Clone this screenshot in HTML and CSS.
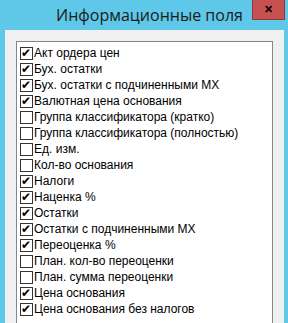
FILE: index.html
```html
<!DOCTYPE html>
<html lang="ru">
<head>
    <meta charset="UTF-8">
    <title>Информационные поля</title>
    <link rel="stylesheet" href="styles.css">
</head>
<body>
    <div class="window">
        <div class="titlebar">
            <span class="title">Информационные поля</span>
            <span class="close">&#x2715;</span>
        </div>
        <div class="body">
            <div class="list">
                <div class="item"><span class="box on"></span>Акт ордера цен</div>
                <div class="item"><span class="box on"></span>Бух. остатки</div>
                <div class="item"><span class="box on"></span>Бух. остатки с подчиненными МХ</div>
                <div class="item"><span class="box on"></span>Валютная цена основания</div>
                <div class="item"><span class="box"></span>Группа классификатора (кратко)</div>
                <div class="item"><span class="box"></span>Группа классификатора (полностью)</div>
                <div class="item"><span class="box"></span>Ед. изм.</div>
                <div class="item"><span class="box"></span>Кол-во основания</div>
                <div class="item"><span class="box on"></span>Налоги</div>
                <div class="item"><span class="box on"></span>Наценка %</div>
                <div class="item"><span class="box on"></span>Остатки</div>
                <div class="item"><span class="box on"></span>Остатки с подчиненными МХ</div>
                <div class="item"><span class="box on"></span>Переоценка %</div>
                <div class="item"><span class="box"></span>План. кол-во переоценки</div>
                <div class="item"><span class="box"></span>План. сумма переоценки</div>
                <div class="item"><span class="box on"></span>Цена основания</div>
                <div class="item"><span class="box on"></span>Цена основания без налогов</div>
            </div>
        </div>
    </div>
</body>
</html>
```

FILE: styles.css
```css
html, body {
    margin: 0;
    padding: 0;
}
body {
    background: #5fc7e7;
    font-family: "Liberation Sans", Arial, sans-serif;
    width: 288px;
    height: 323px;
    overflow: hidden;
}
.window {
    padding: 0 4px 0 5px;
}
.titlebar {
    height: 30px;
    display: flex;
    justify-content: center;
    align-items: center;
    position: relative;
}
.title {
    font-family: "Open Sans", "Liberation Sans", sans-serif;
    font-size: 16px;
    color: #1b1b1b;
    margin-left: 10px;
}
.close {
    position: absolute;
    top: 0;
    right: -1px;
    width: 31px;
    height: 19px;
    background: #c75050;
    border: 1px solid #8c3a3a;
    border-top: none;
    color: #000;
    font-size: 11px;
    font-weight: bold;
    display: flex;
    justify-content: center;
    align-items: center;
}
.body {
    background: #f0f0f0;
    padding: 11px 11px 0 11px;
    height: 282px;
}
.list {
    background: #fff;
    border: 1px solid #828790;
    border-bottom: none;
    padding: 3px 0 0 3px;
    height: 279px;
}
.item {
    height: 16px;
    display: flex;
    align-items: center;
    font-size: 12px;
    color: #000;
    white-space: nowrap;
}
.box {
    width: 11px;
    height: 11px;
    border: 1px solid #333;
    background: #fff;
    margin-right: 1px;
    position: relative;
    flex: none;
}
.box.on::after {
    content: "\2714";
    position: absolute;
    left: 0;
    top: -2px;
    font-family: "DejaVu Sans", sans-serif;
    font-size: 12px;
    line-height: 14px;
    color: #000;
}
```
